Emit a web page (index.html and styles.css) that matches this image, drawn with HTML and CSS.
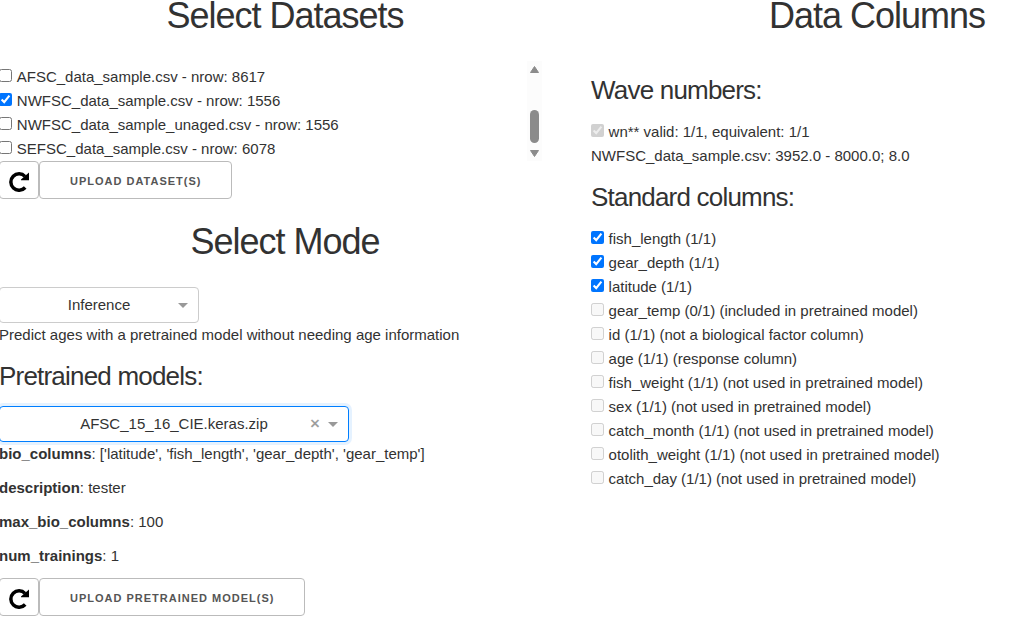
FILE: index.html
```html
<!DOCTYPE html>
<html lang="en">
<head>
<meta charset="utf-8">
<title>Select Datasets</title>
<link rel="stylesheet" href="styles.css">
</head>
<body>
<main class="page">
  <section class="column">
    <h2>Select Datasets</h2>
    <div class="datasets">
      <div class="dataset-list">
        <label><input type="checkbox"> AFSC_data_sample.csv - nrow: 8617</label>
        <label><input type="checkbox" checked> NWFSC_data_sample.csv - nrow: 1556</label>
        <label><input type="checkbox"> NWFSC_data_sample_unaged.csv - nrow: 1556</label>
        <label><input type="checkbox"> SEFSC_data_sample.csv - nrow: 6078</label>
      </div>
      <svg class="scrollbar" width="15" height="100" viewBox="0 0 15 100">
        <rect width="15" height="100" fill="#fcfcfc"/>
        <path d="M7.5 5.5 L11.5 11.5 H3.5 Z" fill="#8b8b8b" stroke="#8b8b8b" stroke-linejoin="round"/>
        <rect x="3" y="49" width="9" height="33" rx="4.5" fill="#8b8b8b"/>
        <path d="M7.5 95.5 L11.5 89.5 H3.5 Z" fill="#8b8b8b" stroke="#8b8b8b" stroke-linejoin="round"/>
      </svg>
    </div>
    <div class="buttons">
      <button class="refresh" aria-label="Refresh datasets"><svg width="20" height="20" viewBox="0 0 20 20"><path d="M16 4.4 A8.2 8.2 0 1 0 16.2 15.5" fill="none" stroke="#000" stroke-width="3.5"/><path d="M20 0.6 V8.3 H12 V7.6 Z" fill="#000"/></svg></button>
      <button>Upload Dataset(s)</button>
    </div>
    <h2 class="mode-title">Select Mode</h2>
    <div class="select mode">
      <span class="value">Inference</span>
      <svg class="arrow" width="10" height="5" viewBox="0 0 10 5"><path d="M0 0H10L5 5Z" fill="#999"/></svg>
    </div>
    <div>Predict ages with a pretrained model without needing age information</div>
    <h4>Pretrained models:</h4>
    <div class="select model">
      <span class="value">AFSC_15_16_CIE.keras.zip</span>
      <span class="clear">×</span>
      <svg class="arrow" width="10" height="5" viewBox="0 0 10 5"><path d="M0 0H10L5 5Z" fill="#999"/></svg>
    </div>
    <p><strong>bio_columns</strong>: ['latitude', 'fish_length', 'gear_depth', 'gear_temp']</p>
    <p><strong>description</strong>: tester</p>
    <p><strong>max_bio_columns</strong>: 100</p>
    <p><strong>num_trainings</strong>: 1</p>
    <div class="buttons">
      <button class="refresh" aria-label="Refresh models"><svg width="20" height="20" viewBox="0 0 20 20"><path d="M16 4.4 A8.2 8.2 0 1 0 16.2 15.5" fill="none" stroke="#000" stroke-width="3.5"/><path d="M20 0.6 V8.3 H12 V7.6 Z" fill="#000"/></svg></button>
      <button>Upload Pretrained Model(s)</button>
    </div>
  </section>
  <section class="column">
    <h2>Data Columns</h2>
    <h4 class="wave-title">Wave numbers:</h4>
    <label><input type="checkbox" checked disabled> wn** valid: 1/1, equivalent: 1/1</label>
    <div>NWFSC_data_sample.csv: 3952.0 - 8000.0; 8.0</div>
    <h4>Standard columns:</h4>
    <label><input type="checkbox" checked> fish_length (1/1)</label>
    <label><input type="checkbox" checked> gear_depth (1/1)</label>
    <label><input type="checkbox" checked> latitude (1/1)</label>
    <label><input type="checkbox" disabled> gear_temp (0/1) (included in pretrained model)</label>
    <label><input type="checkbox" disabled> id (1/1) (not a biological factor column)</label>
    <label><input type="checkbox" disabled> age (1/1) (response column)</label>
    <label><input type="checkbox" disabled> fish_weight (1/1) (not used in pretrained model)</label>
    <label><input type="checkbox" disabled> sex (1/1) (not used in pretrained model)</label>
    <label><input type="checkbox" disabled> catch_month (1/1) (not used in pretrained model)</label>
    <label><input type="checkbox" disabled> otolith_weight (1/1) (not used in pretrained model)</label>
    <label><input type="checkbox" disabled> catch_day (1/1) (not used in pretrained model)</label>
  </section>
</main>
</body>
</html>
```
FILE: styles.css
```css
* { box-sizing: border-box; }
body {
  margin: 0;
  height: 626px;
  overflow: hidden;
  background: #fff;
  color: #323232;
  font: 15px/24px "Liberation Sans", Arial, sans-serif;
}
.page {
  display: grid;
  grid-template-columns: 572px 572px;
  column-gap: 20px;
  margin: -7px 0 0 -1px;
}
h2 {
  margin: 0 0 23px;
  font-size: 36px;
  line-height: 45px;
  font-weight: 400;
  letter-spacing: -1px;
  text-align: center;
}
h4 {
  margin: 12px 0;
  font-size: 26px;
  line-height: 35px;
  font-weight: 400;
  letter-spacing: -0.8px;
}
.wave-title { margin-top: 35px; }
.mode-title { margin-top: 20px; }
label { display: block; height: 24px; white-space: nowrap; }
input { margin: 0 0.4px 0 0; }
.datasets {
  display: flex;
  justify-content: space-between;
  height: 100px;
  padding-right: 29px;
}
.dataset-list { padding-top: 4px; }
.dataset-list input { margin-right: 0.7px; }
.dataset-list label:first-child input { margin-right: 1.4px; }
.buttons { display: flex; }
button {
  height: 38px;
  padding: 0 30px;
  border: 1px solid #bbb;
  border-radius: 4px;
  background: transparent;
  color: #555;
  font: 600 11px/38px "Liberation Sans", Arial, sans-serif;
  letter-spacing: 1px;
  text-transform: uppercase;
  white-space: nowrap;
}
.refresh {
  display: flex;
  align-items: flex-start;
  width: 40px;
  padding: 10px 0 0 9px;
}
.select {
  display: flex;
  align-items: center;
  height: 36px;
  border: 1px solid #ccc;
  border-radius: 4px;
}
.mode { width: 200px; padding: 0 10px 0 20px; }
.model {
  width: 350px;
  padding: 0 10px 0 38px;
  border-color: #007eff;
  box-shadow: 0 0 0 3px rgba(0, 126, 255, .1);
}
.value { flex: 1; text-align: center; }
.clear {
  width: 9px;
  margin: -1px 9px 0 0;
  color: #999;
  font-size: 17px;
  line-height: 18px;
  -webkit-text-stroke: 0.4px #999;
}
p { margin: 0 0 10px; }
```
